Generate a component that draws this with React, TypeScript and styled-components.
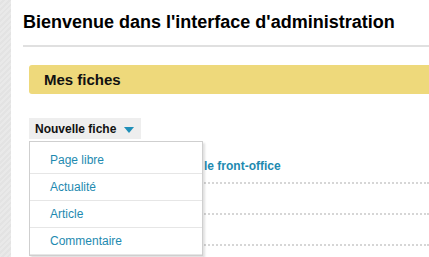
import React from "react";
import styled, { createGlobalStyle } from "styled-components";

const Global = createGlobalStyle`
  html, body { margin: 0; padding: 0; background: #fff; }
  body { font-family: "Liberation Sans", Arial, sans-serif; overflow: hidden; }
`;

const Page = styled.div`
  display: flex;
  width: 429px;
  height: 257px;
  overflow: hidden;
`;

const Stripe = styled.div`
  width: 11px;
  flex: none;
  background: repeating-linear-gradient(135deg, #e9e9e9 0 2px, #e3e3e3 2px 4px);
`;

const Main = styled.div`
  flex: 1;
  padding: 12px 0 0 12px;
  min-width: 0;
`;

const Title = styled.h1`
  margin: 0;
  font-size: 18px;
  font-weight: bold;
  color: #000;
  line-height: 21px;
  white-space: nowrap;
  padding-bottom: 12px;
  border-bottom: 2px solid #e0e0e0;
`;

const Section = styled.div`
  padding: 18px 0 0 6px;
`;

const SectionHead = styled.div`
  background: #eed97b;
  border-radius: 3px 0 0 3px;
  height: 29px;
  display: flex;
  align-items: center;
  padding-left: 15px;
  font-size: 15px;
  font-weight: bold;
  color: #111;
`;

const Toolbar = styled.div`
  position: relative;
  margin-top: 24px;
`;

const NewButton = styled.div`
  display: inline-flex;
  align-items: center;
  gap: 8px;
  height: 21px;
  padding: 0 7px 0 6px;
  background: #eeeeee;
  font-size: 12px;
  font-weight: bold;
  color: #111;
`;

const Caret = styled.span`
  width: 0;
  height: 0;
  border-left: 5px solid transparent;
  border-right: 5px solid transparent;
  border-top: 6px solid #1f8fb8;
  margin-top: 2px;
`;

const Menu = styled.ul`
  position: absolute;
  left: 0;
  top: 23px;
  width: 172px;
  margin: 0;
  padding: 0;
  list-style: none;
  background: #fff;
  border: 1px solid #cfcfcf;
  box-shadow: 2px 2px 2px rgba(0, 0, 0, 0.12);
  z-index: 2;
`;

const MenuItem = styled.li<{ $first?: boolean }>`
  height: ${(p) => (p.$first ? 27 : 26)}px;
  display: flex;
  align-items: center;
  padding: ${(p) => (p.$first ? "4px" : "0")} 0 0 20px;
  box-sizing: content-box;
  border-bottom: 1px solid #e6e6e6;
  font-size: 12px;
  color: #1e8ab0;
`;

const Rows = styled.div`
  margin-top: 14px;
`;

const Row = styled.div`
  height: 29px;
  border-bottom: 2px dotted #d6d6d6;
  display: flex;
  align-items: center;
  padding-left: 175px;
`;

const Link = styled.a`
  font-size: 12px;
  font-weight: bold;
  color: #1e8ab0;
  text-decoration: none;
  white-space: nowrap;
  margin-bottom: 3px;
`;

export default function App() {
  return (
    <>
      <Global />
      <Page>
        <Stripe />
        <Main>
          <Title>Bienvenue dans l'interface d'administration</Title>
          <Section>
            <SectionHead>Mes fiches</SectionHead>
            <Toolbar>
              <NewButton>
                Nouvelle fiche
                <Caret />
              </NewButton>
              <Menu>
                <MenuItem $first>Page libre</MenuItem>
                <MenuItem>Actualité</MenuItem>
                <MenuItem>Article</MenuItem>
                <MenuItem>Commentaire</MenuItem>
              </Menu>
              <Rows>
                <Row>
                  <Link href="#">le front-office</Link>
                </Row>
                <Row />
                <Row />
              </Rows>
            </Toolbar>
          </Section>
        </Main>
      </Page>
    </>
  );
}
